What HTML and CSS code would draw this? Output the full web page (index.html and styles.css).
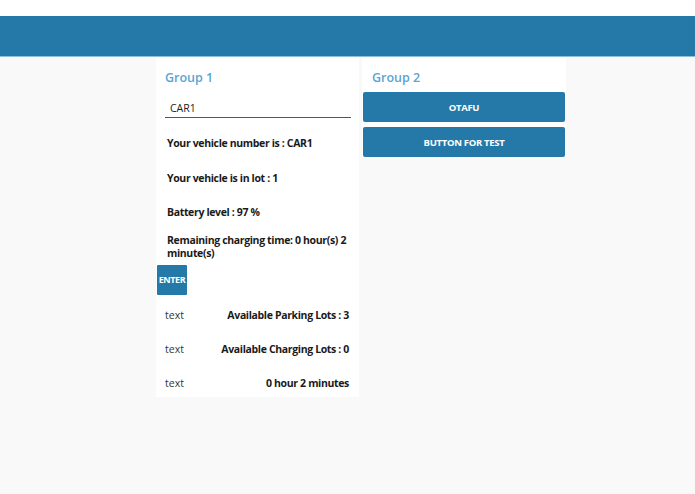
FILE: index.html
```html
<!DOCTYPE html>
<html>
<head>
<meta charset="utf-8">
<link rel="stylesheet" href="styles.css">
</head>
<body>
<div class="topgap"></div>
<header class="bar"></header>
<main class="content">
  <section class="panel panel-one">
    <h2 class="group-title">Group 1</h2>
    <div class="field"><input class="field-input" type="text" value="CAR1"></div>
    <p class="info info-first">Your vehicle number is : CAR1</p>
    <p class="info">Your vehicle is in lot : 1</p>
    <p class="info">Battery level : 97 %</p>
    <p class="info">Remaining charging time: 0 hour(s) 2 minute(s)</p>
    <button class="enter">ENTER</button>
    <div class="row row-first"><span class="row-label">text</span><span class="row-value">Available Parking Lots : 3</span></div>
    <div class="row"><span class="row-label">text</span><span class="row-value">Available Charging Lots : 0</span></div>
    <div class="row"><span class="row-label">text</span><span class="row-value">0 hour 2 minutes</span></div>
  </section>
  <section class="panel panel-two">
    <h2 class="group-title">Group 2</h2>
    <button class="wide-btn">OTAFU</button>
    <button class="wide-btn">BUTTON FOR TEST</button>
  </section>
</main>
</body>
</html>
```
FILE: styles.css
```css
* { box-sizing: border-box; }
html, body { margin: 0; padding: 0; }
body {
  background: #f9f9f9;
  font-family: "Open Sans", "Noto Sans", sans-serif;
  color: #1a1a1a;
  width: 695px;
  height: 494px;
  overflow: hidden;
}
.topgap { height: 16px; background: #ffffff; }
.bar {
  height: 41px;
  background: #2479a8;
  border-bottom: 1px solid #8ec0da;
}
.content {
  display: flex;
  align-items: flex-start;
  gap: 3px;
  padding-left: 156px;
  padding-top: 1px;
}
.panel { background: #ffffff; width: 203px; }
.panel-one { padding: 12px 0 0 0; height: 339px; overflow: hidden; }
.panel-two { padding: 12px 0 0 1px; width: 204px; }
.group-title {
  margin: 0 0 0 9px;
  font-size: 12.5px;
  font-weight: 600;
  color: #5aa5d3;
  line-height: 16px;
}
.field { padding: 9px 8px 0 9px; }
.field-input {
  width: 100%;
  border: none;
  border-bottom: 1px solid #555;
  background: transparent;
  font-family: inherit;
  font-size: 10.5px;
  color: #222;
  padding: 0 0 1px 5px;
  height: 17px;
  outline: none;
}
.info {
  margin: 0;
  padding: 0 8px 0 11px;
  font-size: 10.5px;
  font-weight: 700;
  letter-spacing: -0.35px;
  line-height: 13px;
  height: 34.5px;
  display: flex;
  align-items: center;
}
.info-first { margin-top: 9px; }
.enter {
  display: block;
  margin: 0 0 0 1px;
  width: 30px;
  height: 30px;
  border: none;
  border-radius: 1px;
  padding: 0;
  background: #2479a8;
  color: #ffffff;
  font-family: inherit;
  font-size: 9px;
  font-weight: 700;
  letter-spacing: -0.4px;
}
.row {
  display: flex;
  justify-content: space-between;
  align-items: center;
  height: 34px;
  padding: 0 10px 0 9px;
  font-size: 10.5px;
}
.row-first { margin-top: 3px; }
.row-label { color: #333; font-weight: 400; }
.row-value { font-weight: 700; letter-spacing: -0.35px; }
.wide-btn {
  display: block;
  width: 202px;
  height: 30px;
  margin: 0 0 5px 0;
  border: none;
  border-radius: 2px;
  background: #2479a8;
  color: #ffffff;
  font-family: inherit;
  font-size: 9.5px;
  font-weight: 700;
  letter-spacing: -0.3px;
}
.panel-two .group-title { margin-bottom: 6px; }
.panel-two .wide-btn:last-child { margin-bottom: 0; }
```
